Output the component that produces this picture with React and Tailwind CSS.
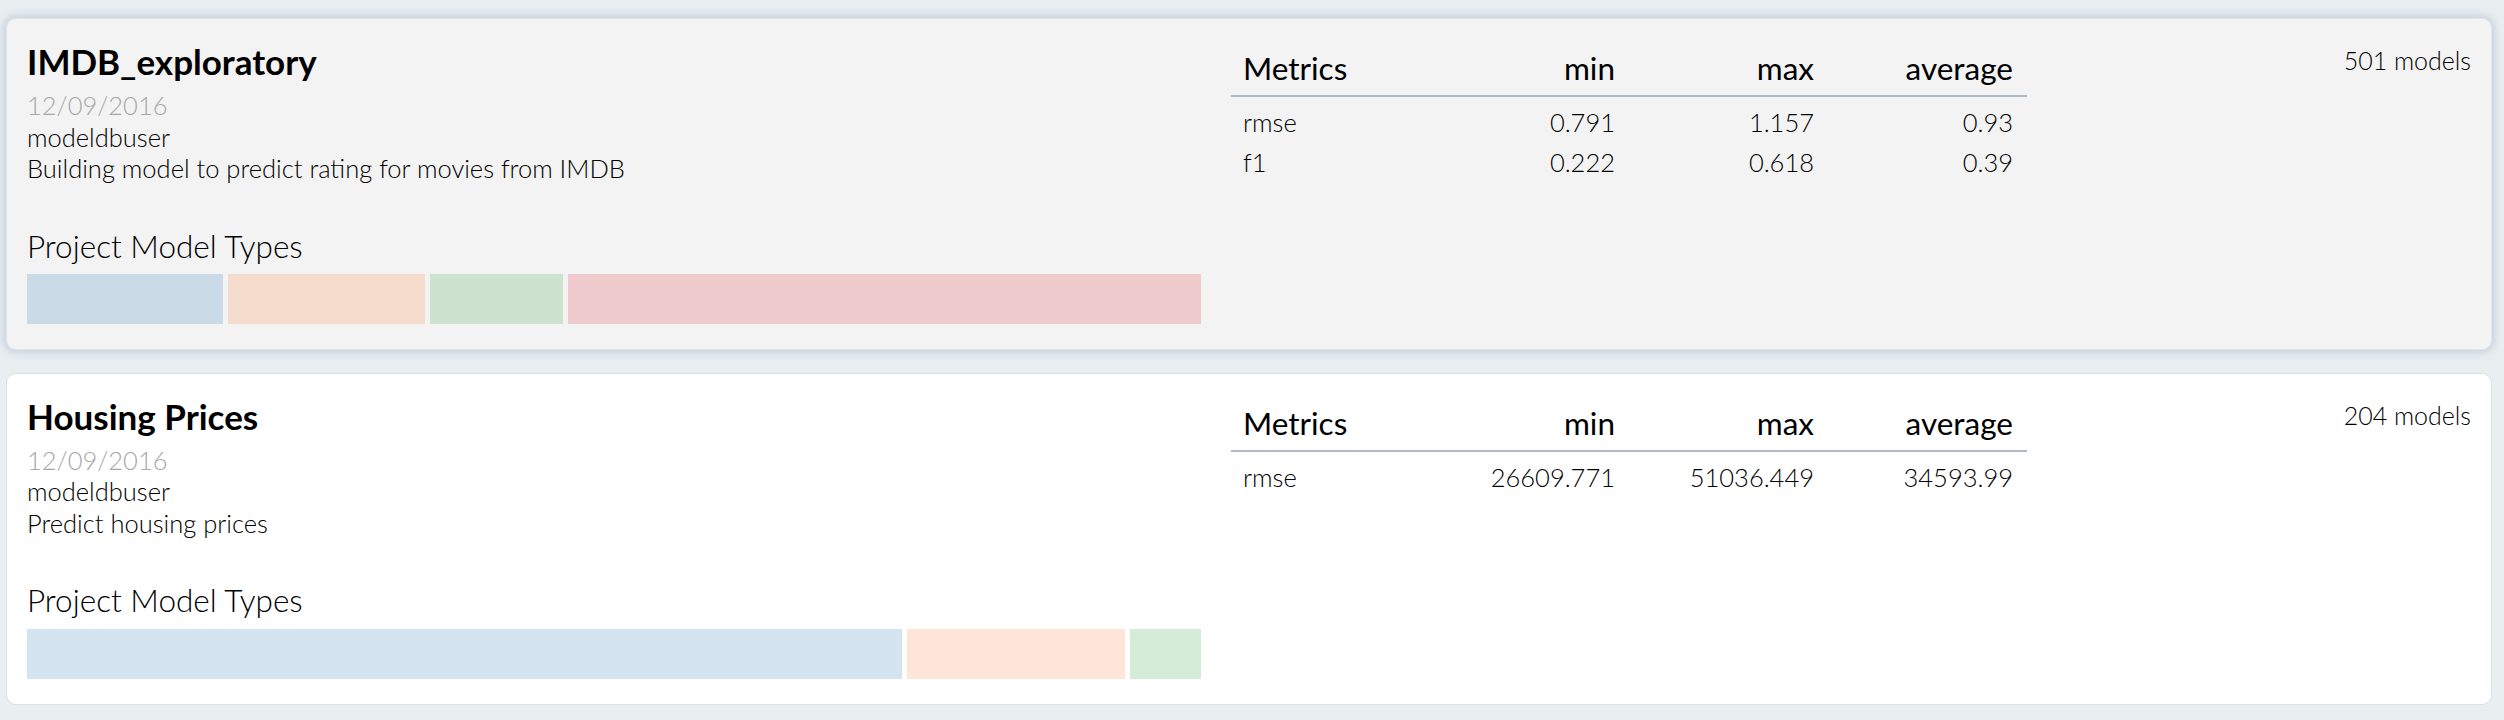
import React from "react";

const projects = [
  {
    name: "IMDB_exploratory",
    date: "12/09/2016",
    user: "modeldbuser",
    desc: "Building model to predict rating for movies from IMDB",
    count: "501 models",
    active: true,
    metrics: [
      ["rmse", "0.791", "1.157", "0.93"],
      ["f1", "0.222", "0.618", "0.39"],
    ],
    bars: [
      [196, "bg-[#cbdae7]"],
      [197, "bg-[#f6dccc]"],
      [133, "bg-[#cde3cf]"],
      [634, "bg-[#efcbce]"],
    ],
  },
  {
    name: "Housing Prices",
    date: "12/09/2016",
    user: "modeldbuser",
    desc: "Predict housing prices",
    count: "204 models",
    active: false,
    metrics: [["rmse", "26609.771", "51036.449", "34593.99"]],
    bars: [
      [873, "bg-[#d4e4f1]"],
      [218, "bg-[#fde5d7]"],
      [71, "bg-[#d5ecd8]"],
    ],
  },
];

function Card({ p }) {
  return (
    <div
      className={
        "flex rounded-[10px] border px-[20px] pt-[17px] pb-[25px] " +
        (p.active
          ? "bg-[#f3f3f3] border-[#e3e7ec] shadow-[0_0_9px_2px_rgba(160,178,200,0.55)]"
          : "bg-white border-[#d9e0e8]")
      }
    >
      <div className="w-[1174px] shrink-0">
        <div className="text-[35px] leading-[50px] font-bold text-black">{p.name}</div>
        <div className="mt-[4px] text-[25.5px] leading-[31.5px] font-light text-black">
          <div className="text-[#a8a8a8]">{p.date}</div>
          <div>{p.user}</div>
          <div>{p.desc}</div>
        </div>
        <div className="mt-[42px] text-[31.5px] leading-[38.4px] font-light text-black">
          Project Model Types
        </div>
        <div className="mt-[9px] flex h-[50px] gap-[5px]">
          {p.bars.map(([w, c], i) => (
            <div key={i} className={c} style={{ flexGrow: w, flexBasis: 0 }} />
          ))}
        </div>
      </div>
      <div className="ml-[30px] w-[796px] shrink-0 pt-[16px]">
        <table className="w-full table-fixed border-collapse text-black">
          <thead>
            <tr className="border-b-2 border-[#adbac8]">
              <th className="pl-[12px] pb-[9px] text-left text-[31.5px] leading-[33.6px] font-normal">Metrics</th>
              <th className="pr-[14px] pb-[9px] text-right text-[31.5px] leading-[33.6px] font-normal">min</th>
              <th className="pr-[14px] pb-[9px] text-right text-[31.5px] leading-[33.6px] font-normal">max</th>
              <th className="pr-[14px] pb-[9px] text-right text-[31.5px] leading-[33.6px] font-normal">average</th>
            </tr>
          </thead>
          <tbody className="text-[25.5px] leading-[40px] font-light">
            {p.metrics.map((r, i) => (
              <tr key={r[0]} className={i === 0 ? "[&>td]:pt-[5px]" : ""}>
                <td className="pl-[12px] text-left">{r[0]}</td>
                <td className="pr-[14px] text-right">{r[1]}</td>
                <td className="pr-[14px] text-right">{r[2]}</td>
                <td className="pr-[14px] text-right">{r[3]}</td>
              </tr>
            ))}
          </tbody>
        </table>
      </div>
      <div className="flex-1 pt-[9px] text-right text-[25px] leading-[30px] font-light text-black">
        {p.count}
      </div>
    </div>
  );
}

export default function App() {
  return (
    <div className="min-h-screen bg-[#e9eef1] pl-[6px] pr-[12px] pt-[18px] pb-[14px] font-['Lato',sans-serif]">
      <div className="flex flex-col gap-[23px]">
        {projects.map((p) => (
          <Card key={p.name} p={p} />
        ))}
      </div>
    </div>
  );
}
